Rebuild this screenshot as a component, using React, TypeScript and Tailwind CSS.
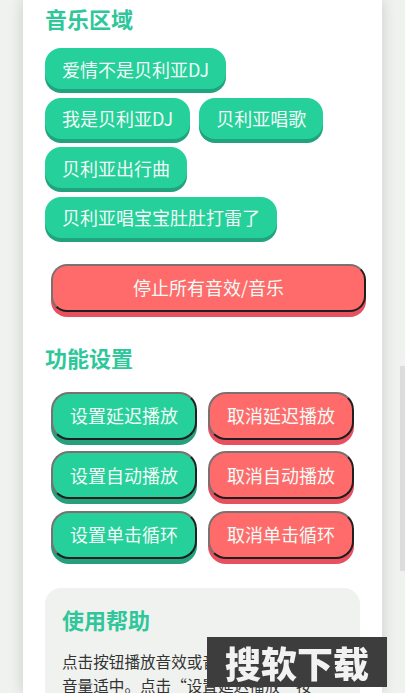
const FONT = "font-['Noto_Sans_CJK_SC','Noto_Sans',sans-serif]";

const musicRows = [
  ["爱情不是贝利亚DJ"],
  ["我是贝利亚DJ", "贝利亚唱歌"],
  ["贝利亚出行曲"],
  ["贝利亚唱宝宝肚肚打雷了"],
];

const settings = [
  ["设置延迟播放", "取消延迟播放"],
  ["设置自动播放", "取消自动播放"],
  ["设置单击循环", "取消单击循环"],
];

function SoundButton({ label }: { label: string }) {
  return (
    <button className="h-[41px] rounded-[16px] bg-[#26d09a] px-[17px] text-[18px] leading-[40px] text-[#f1fbf7] shadow-[0_4px_0_#20a37e]">
      {label}
    </button>
  );
}

function OutsetButton({ label, tone }: { label: string; tone: "green" | "red" }) {
  const color =
    tone === "green"
      ? "bg-[#26d09a] shadow-[0_5px_0_#259f7c]"
      : "bg-[#ff6b6b] shadow-[0_5px_0_#e84f5f]";
  return (
    <button
      className={`h-[48px] w-[146px] rounded-[18px] border-2 border-t-[#7c7070] border-l-[#7c7070] border-r-[#1f1f1f] border-b-[#1f1f1f] text-[18px] text-[#f1fbf7] ${color}`}
    >
      {label}
    </button>
  );
}

export default function App() {
  return (
    <div className={`relative h-[693px] w-[405px] overflow-hidden bg-[#f0f2ef] ${FONT}`}>
      <div className="mx-[23px] h-full w-[359px] bg-white px-[22px] pt-[2px] shadow-[0_0_14px_rgba(0,0,0,0.16)]">
        <h2 className="text-[22px] leading-[32px] font-bold text-[#2fc79a]">音乐区域</h2>

        <div className="mt-[14px] flex flex-col gap-[8.5px]">
          {musicRows.map((row) => (
            <div key={row[0]} className="flex gap-[9px]">
              {row.map((label) => (
                <SoundButton key={label} label={label} />
              ))}
            </div>
          ))}
        </div>

        <button className="mt-[26px] ml-[6px] h-[48px] w-[315px] rounded-[16px] border-2 border-t-[#7c7070] border-l-[#7c7070] border-r-[#1f1f1f] border-b-[#1f1f1f] bg-[#ff6b6b] text-[18px] text-[#f1fbf7] shadow-[0_5px_0_#e84f5f]">
          停止所有音效/音乐
        </button>

        <h2 className="mt-[29px] text-[22px] leading-[32px] font-bold text-[#2fc79a]">功能设置</h2>

        <div className="mt-[19px] ml-[6px] flex flex-col gap-[11.5px]">
          {settings.map(([on, off]) => (
            <div key={on} className="flex gap-[11px]">
              <OutsetButton label={on} tone="green" />
              <OutsetButton label={off} tone="red" />
            </div>
          ))}
        </div>

        <div className="mt-[29px] h-[200px] rounded-[16px] bg-[#f0f2ef] px-[17px] pt-[14px]">
          <h3 className="text-[22px] leading-[34px] font-bold text-[#2fc79a]">使用帮助</h3>
          <p className="mt-[13px] text-[15.6px] leading-[24.5px] text-[#333333]">
            点击按钮播放音效或音乐，建议将手机
            <br />
            音量适中。点击“设置延迟播放”按
          </p>
        </div>
      </div>

      {/* scrollbar thumb */}
      <div className="absolute top-[366px] right-0 h-[205px] w-[5px] bg-[#dcdcdc]" />

      {/* watermark */}
      <div className="absolute top-[637px] left-[207px] flex h-[50px] w-[180px] items-center justify-center bg-[#3d3d3d] text-[36px] font-black text-[#f2f2f2] blur-[0.6px]">
        搜软下载
      </div>
    </div>
  );
}
